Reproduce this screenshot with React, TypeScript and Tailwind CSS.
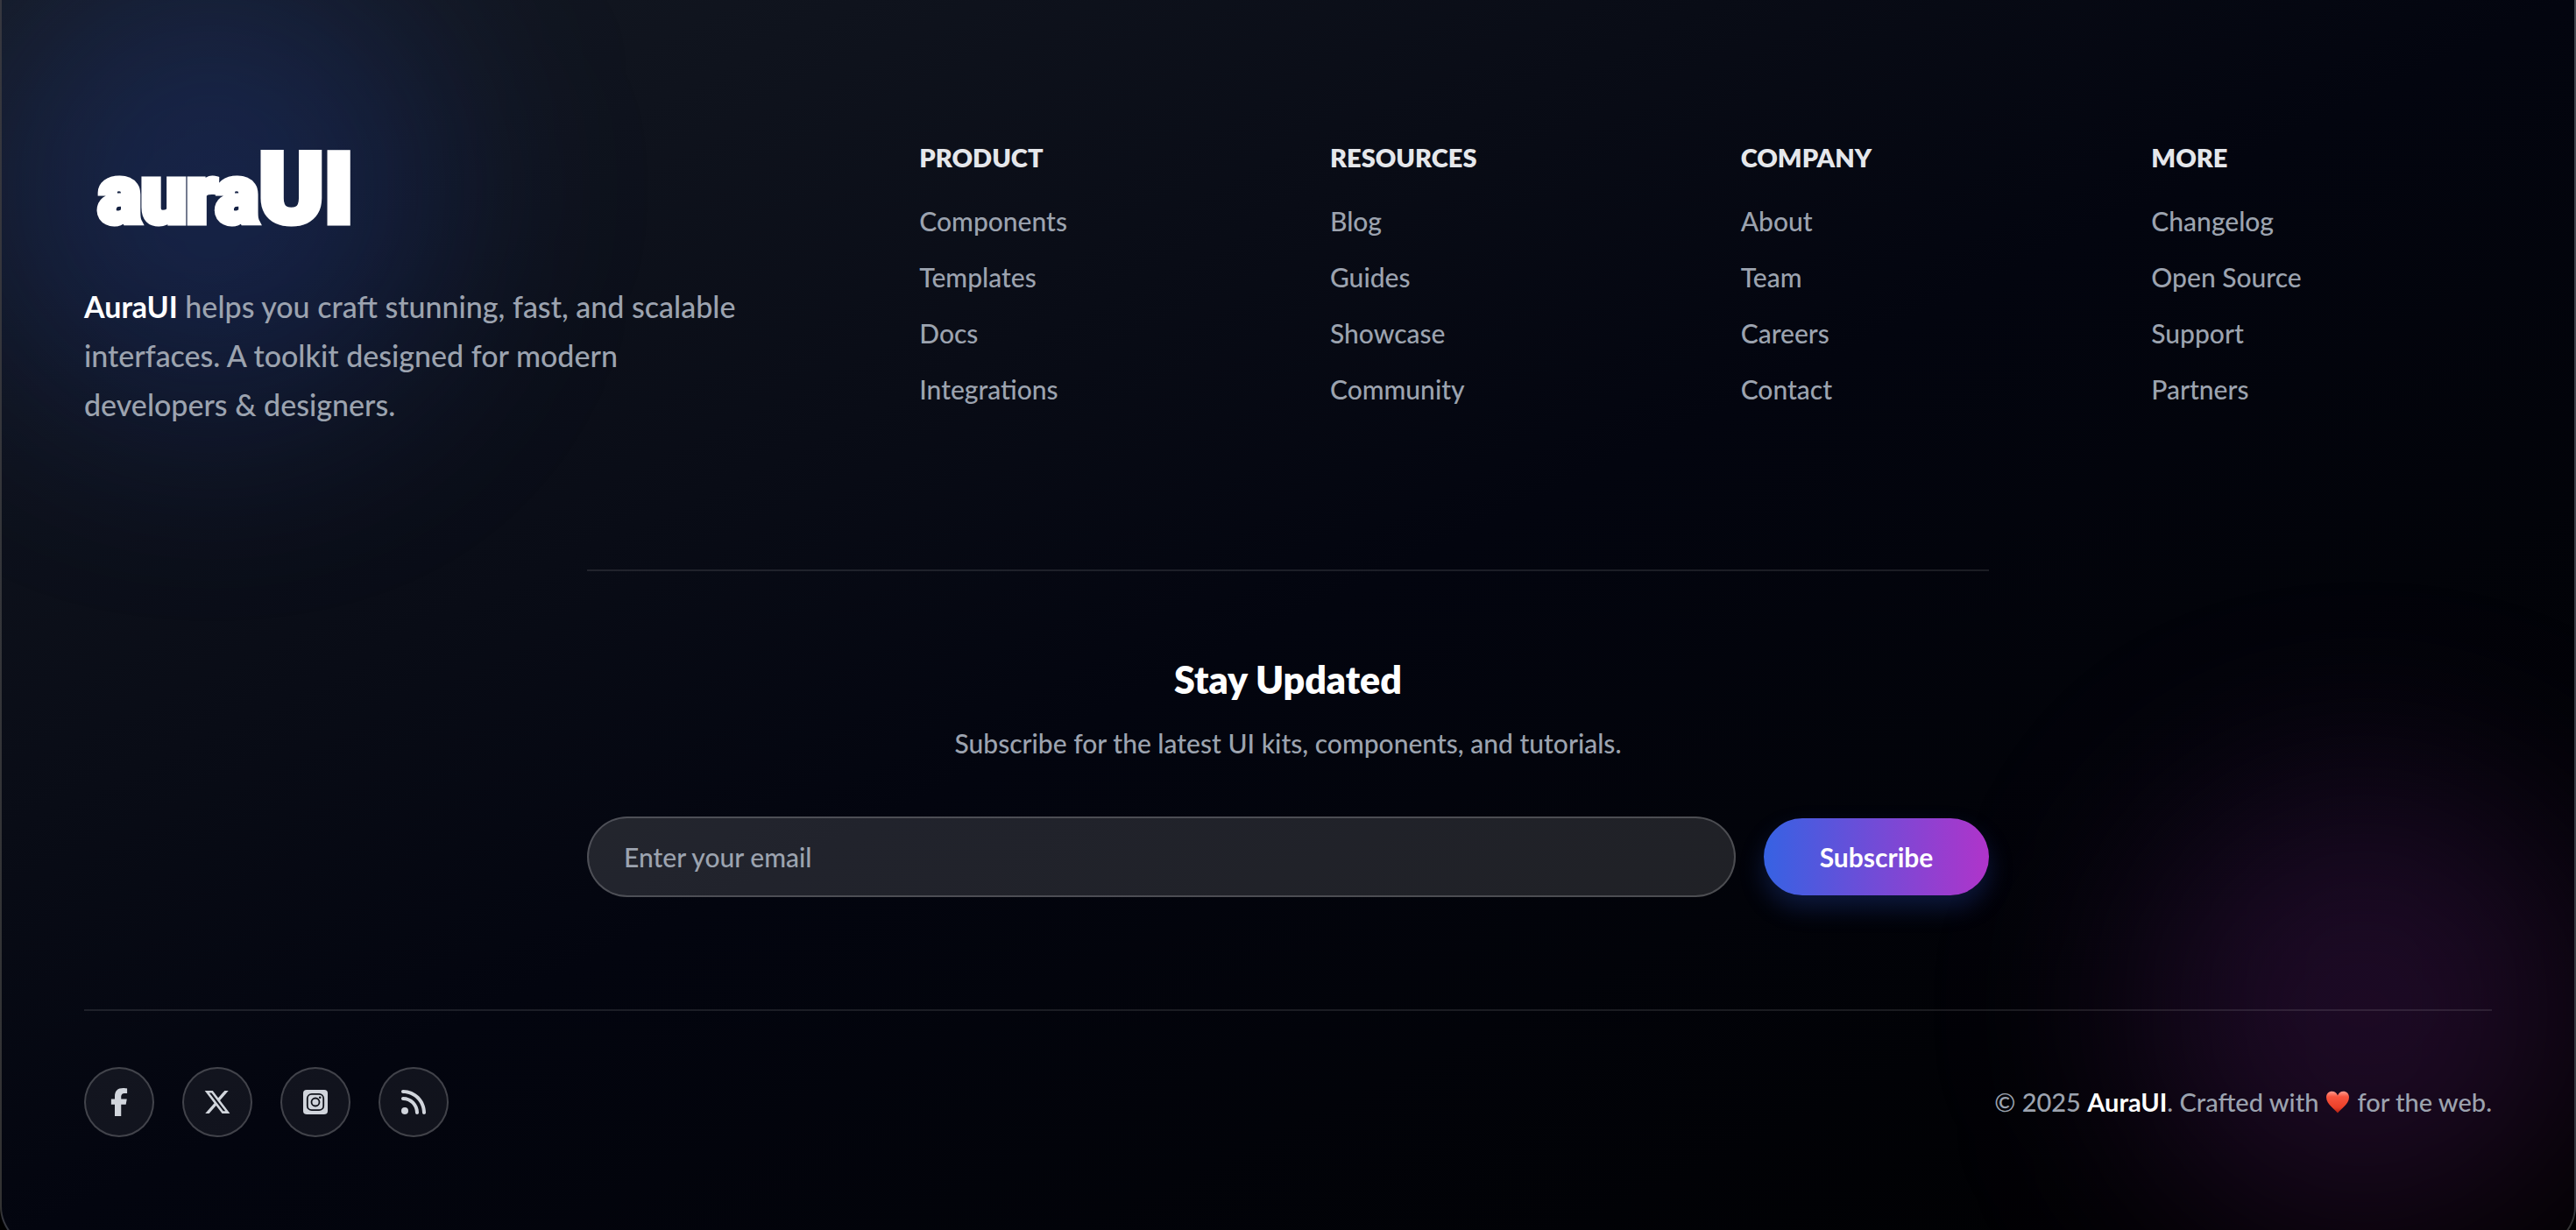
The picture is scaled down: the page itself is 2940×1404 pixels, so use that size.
import type { ReactNode } from "react";
import { FaFacebookF, FaRss, FaXTwitter } from "react-icons/fa6";

const columns = [
  { title: "Product", links: ["Components", "Templates", "Docs", "Integrations"] },
  { title: "Resources", links: ["Blog", "Guides", "Showcase", "Community"] },
  { title: "Company", links: ["About", "Team", "Careers", "Contact"] },
  { title: "More", links: ["Changelog", "Open Source", "Support", "Partners"] },
];

function Logo() {
  return (
    <a
      href="#"
      aria-label="auraUI"
      className="flex h-[120px] items-baseline pl-4 font-['Roboto',sans-serif] font-black leading-[128px] text-white [-webkit-text-stroke:7px_white]"
    >
      <span className="text-[92px]">aura</span>
      <span className="text-[112px]">UI</span>
    </a>
  );
}

function InstagramIcon() {
  return (
    <svg viewBox="0 0 28 28" className="size-7" aria-hidden="true">
      <rect width="28" height="28" rx="4" fill="currentColor" />
      <g fill="none" stroke="#10131b" strokeWidth="1.8">
        <rect x="4.8" y="4.8" width="18.4" height="18.4" rx="5" />
        <circle cx="14" cy="14" r="4.5" />
      </g>
      <circle cx="19.2" cy="8.8" r="1.3" fill="#10131b" />
    </svg>
  );
}

function Heart() {
  return (
    <svg viewBox="0 0 28 26" className="mx-2 inline-block h-[26px] w-7 align-[-2px]" role="img" aria-label="love">
      <defs>
        <linearGradient id="heart" x1="0" y1="0" x2="0" y2="1">
          <stop offset="0" stopColor="#ff9a8c" />
          <stop offset="0.25" stopColor="#f8553f" />
          <stop offset="0.75" stopColor="#ea3f28" />
          <stop offset="1" stopColor="#b02012" />
        </linearGradient>
      </defs>
      <path
        d="M14 25.500C11.500 21.500 1 15.500 1 7.500C1 3.500 4 .800 7.500 .800C10.500 .800 13 2.500 14 5.500C15 2.500 17.500 .800 20.500 .800C24 .800 27 3.500 27 7.500C27 15.500 16.500 21.500 14 25.500Z"
        fill="url(#heart)"
      />
    </svg>
  );
}

function SocialLink({ label, children }: { label: string; children: ReactNode }) {
  return (
    <a
      href="#"
      aria-label={label}
      className="flex size-20 items-center justify-center rounded-full border-2 border-white/20 bg-white/6 text-gray-300"
    >
      {children}
    </a>
  );
}

export default function App() {
  return (
    <div className="max-h-screen overflow-hidden bg-black font-['Lato',sans-serif] font-medium text-[#9ca3af]">
      <footer className="relative isolate overflow-hidden rounded-b-[48px] border-x-2 border-b-2 border-white/20 bg-linear-to-br/srgb from-[#151a24] via-[#03050f] to-black px-[94px] pt-[152px] pb-[125px]">
        <div className="absolute -top-10 -left-4 -z-10 size-[512px] rounded-full bg-[#2f5be0]/22 blur-[120px]" />
        <div className="absolute -right-4 bottom-4 -z-10 size-[512px] rounded-full bg-[#a838c0]/18 blur-[120px]" />

        <div className="grid grid-cols-3 gap-28">
          <div>
            <Logo />
            <p className="mt-[50px] max-w-3xl text-[34px] leading-[56px]">
              <strong className="font-bold text-white">AuraUI</strong> helps you craft stunning, fast, and scalable
              interfaces. A toolkit designed for modern developers &amp; designers.
            </p>
          </div>
          <nav className="col-span-2 grid grid-cols-4 gap-20 pt-2">
            {columns.map((column) => (
              <div key={column.title}>
                <h3 className="text-[29px] leading-10 font-extrabold text-[#e5e7eb] uppercase">{column.title}</h3>
                <ul className="mt-8 flex flex-col gap-6 text-[30px] leading-10">
                  {column.links.map((link) => (
                    <li key={link}>
                      <a href="#">{link}</a>
                    </li>
                  ))}
                </ul>
              </div>
            ))}
          </nav>
        </div>

        <section className="mx-auto mt-[160px] max-w-[1600px] border-t-2 border-white/10 pt-24 text-center">
          <h2 className="text-[43px] leading-[56px] font-extrabold text-white">Stay Updated</h2>
          <p className="mt-6 text-[30px] leading-10">Subscribe for the latest UI kits, components, and tutorials.</p>
          <form className="mt-16 flex items-center gap-8">
            <input
              type="email"
              aria-label="Email address"
              placeholder="Enter your email"
              className="h-[92px] min-w-0 flex-1 rounded-full border-2 border-white/20 bg-white/12 px-10 text-[30px] placeholder:text-[#9ca3af]"
            />
            <button
              type="button"
              className="h-[88px] w-[257px] rounded-full bg-linear-to-r/srgb from-[#3662e3] to-[#b034ca] text-[30px] font-bold text-white shadow-[0_14px_28px_rgba(47,91,224,0.25)]"
            >
              Subscribe
            </button>
          </form>
        </section>

        <div className="mt-32 flex items-center justify-between border-t-2 border-white/10 pt-16">
          <div className="flex gap-8">
            <SocialLink label="Facebook">
              <FaFacebookF className="size-8" />
            </SocialLink>
            <SocialLink label="X">
              <FaXTwitter className="size-8" />
            </SocialLink>
            <SocialLink label="Instagram">
              <InstagramIcon />
            </SocialLink>
            <SocialLink label="RSS feed">
              <FaRss className="size-8" />
            </SocialLink>
          </div>
          <p className="text-[29px] leading-10">
            © 2025 <strong className="font-bold text-white">AuraUI</strong>. Crafted with
            <Heart />
            for the web.
          </p>
        </div>
      </footer>
    </div>
  );
}
